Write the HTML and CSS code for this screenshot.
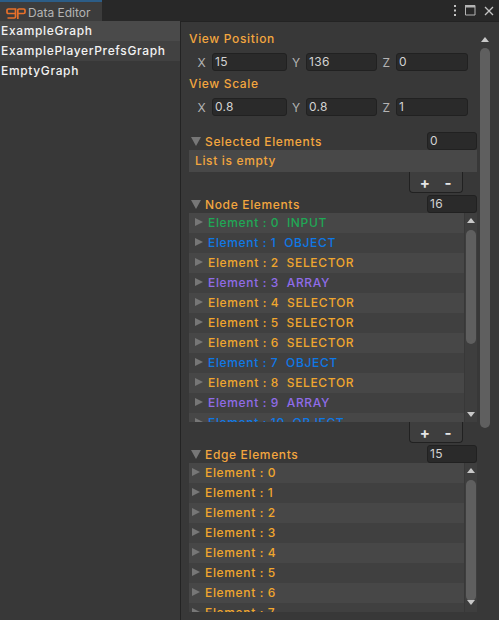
FILE: index.html
```html
<!DOCTYPE html>
<html lang="en">
<head>
    <meta charset="UTF-8">
    <title>Data Editor</title>
    <link rel="stylesheet" href="styles.css">
</head>
<body>

    <header class="tabbar">
        <div class="tab">
            <svg class="logo" width="20" height="11" viewBox="0 0 20 11">
                <path d="M9.500 5.500H2.300Q1 5.500 1 4.200V2.300Q1 1 2.300 1H9.500V8.700Q9.500 10 8.200 10H1.500" fill="none" stroke="#e8702a" stroke-width="1.700"/>
                <path d="M11.800 11V2.300Q11.800 1 13.100 1H17.700Q19 1 19 2.300V4.200Q19 5.500 17.700 5.500H11.800" fill="none" stroke="#e8702a" stroke-width="1.700"/>
            </svg>
            <span class="tab-title">Data Editor</span>
        </div>
        <div class="window-btns">
            <svg width="4" height="11" viewBox="0 0 4 11"><path d="M1 0h2v2H1zM1 4.500h2v2H1zM1 9h2v2H1z" fill="#c4c4c4"/></svg>
            <svg width="11" height="11" viewBox="0 0 11 11"><path d="M.5 .5h9.500v9.500H.5z" fill="none" stroke="#b4b4b4"/><path d="M0 0h10v2.500H0z" fill="#b4b4b4"/></svg>
            <svg width="10" height="10" viewBox="0 0 10 10"><path d="M1 1l8 8M9 1l-8 8" stroke="#c4c4c4" stroke-width="1.300"/></svg>
        </div>
    </header>

    <main class="panes">
        <nav class="graph-list">
            <div class="graph selected">ExampleGraph</div>
            <div class="graph alt">ExamplePlayerPrefsGraph</div>
            <div class="graph">EmptyGraph</div>
        </nav>

        <section class="inspector">
            <div class="content">
                <h2 class="label first">View Position</h2>
                <div class="vector">
                    <span>X</span><div class="field">15</div>
                    <span>Y</span><div class="field">136</div>
                    <span>Z</span><div class="field">0</div>
                </div>
                <h2 class="label">View Scale</h2>
                <div class="vector">
                    <span>X</span><div class="field">0.8</div>
                    <span>Y</span><div class="field">0.8</div>
                    <span>Z</span><div class="field">1</div>
                </div>

                <div class="list-head head-selected">
                    <i class="tri down"></i><h2>Selected Elements</h2><div class="field count">0</div>
                </div>
                <div class="empty">List is empty</div>
                <div class="footer"><div class="addremove"><b>+</b><b>-</b></div></div>

                <div class="list-head">
                    <i class="tri down"></i><h2>Node Elements</h2><div class="field count">16</div>
                </div>
                <div class="list nodes">
                    <div class="rows">
                        <div class="row"><i class="tri right"></i><span class="green">Element : 0&nbsp; INPUT</span></div>
                        <div class="row"><i class="tri right"></i><span class="blue">Element : 1&nbsp; OBJECT</span></div>
                        <div class="row"><i class="tri right"></i><span class="orange">Element : 2&nbsp; SELECTOR</span></div>
                        <div class="row"><i class="tri right"></i><span class="purple">Element : 3&nbsp; ARRAY</span></div>
                        <div class="row"><i class="tri right"></i><span class="orange">Element : 4&nbsp; SELECTOR</span></div>
                        <div class="row"><i class="tri right"></i><span class="orange">Element : 5&nbsp; SELECTOR</span></div>
                        <div class="row"><i class="tri right"></i><span class="orange">Element : 6&nbsp; SELECTOR</span></div>
                        <div class="row"><i class="tri right"></i><span class="blue">Element : 7&nbsp; OBJECT</span></div>
                        <div class="row"><i class="tri right"></i><span class="orange">Element : 8&nbsp; SELECTOR</span></div>
                        <div class="row"><i class="tri right"></i><span class="purple">Element : 9&nbsp; ARRAY</span></div>
                        <div class="row"><i class="tri right"></i><span class="blue">Element : 10&nbsp; OBJECT</span></div>
                    </div>
                    <div class="scroll inner"><i class="arrow up"></i><div class="track"><div class="thumb"></div></div><i class="arrow dn"></i></div>
                </div>
                <div class="footer"><div class="addremove"><b>+</b><b>-</b></div></div>

                <div class="list-head">
                    <i class="tri down"></i><h2>Edge Elements</h2><div class="field count">15</div>
                </div>
                <div class="list edges">
                    <div class="rows">
                        <div class="row"><i class="tri right"></i><span class="orange">Element : 0</span></div>
                        <div class="row"><i class="tri right"></i><span class="orange">Element : 1</span></div>
                        <div class="row"><i class="tri right"></i><span class="orange">Element : 2</span></div>
                        <div class="row"><i class="tri right"></i><span class="orange">Element : 3</span></div>
                        <div class="row"><i class="tri right"></i><span class="orange">Element : 4</span></div>
                        <div class="row"><i class="tri right"></i><span class="orange">Element : 5</span></div>
                        <div class="row"><i class="tri right"></i><span class="orange">Element : 6</span></div>
                        <div class="row"><i class="tri right"></i><span class="orange">Element : 7</span></div>
                    </div>
                    <div class="scroll inner"><i class="arrow up"></i><div class="track"><div class="thumb"></div></div><i class="arrow dn"></i></div>
                </div>
            </div>
            <div class="scroll outer"><i class="arrow up"></i><div class="track"><div class="thumb"></div></div></div>
        </section>
    </main>

</body>
</html>
```

FILE: styles.css
```css
html, body {
    margin: 0;
    padding: 0;
    height: 100%;
    overflow: hidden;
}

body {
    display: flex;
    flex-direction: column;
    background: #383838;
    color: #ddd;
    font-family: Inter, "Noto Sans", sans-serif;
    font-size: 12px;
    letter-spacing: 0.65px;
}

h2 {
    margin: 0;
    font-size: 12px;
    font-weight: 500;
    color: #f3a63f;
}

/* Tab bar */
.tabbar {
    height: 21px;
    flex: none;
    display: flex;
    justify-content: space-between;
    background: #282828;
}

.tab {
    width: 102px;
    box-sizing: border-box;
    border-top: 2px solid #2c5d87;
    background: #3c3c3c;
    display: flex;
    align-items: center;
    gap: 2px;
    padding-left: 6px;
    color: #b4b4b4;
    letter-spacing: 0;
}

.logo { margin-top: 3px; }
.tab-title { padding-top: 2px; }

.window-btns {
    display: flex;
    align-items: center;
    gap: 8px;
    padding-right: 5px;
}

/* Panes */
.panes {
    flex: 1;
    display: flex;
    min-height: 0;
}

.graph-list {
    width: 180px;
    flex: none;
    border-right: 1px solid #232323;
    font-weight: 500;
    color: #f2f2f2;
}

.graph {
    height: 20px;
    line-height: 20px;
    padding-left: 1px;
}

.graph.selected { background: #4a4a4a; }
.graph.alt { background: #414141; }

.inspector {
    flex: 1;
    display: flex;
    min-width: 0;
    border-top: 1px solid #232323;
}

.content {
    width: 288px;
    flex: none;
    padding: 9px 0 0 8px;
    overflow: hidden;
}

.label {
    height: 15px;
    line-height: 15px;
    margin-top: 5px;
}

.label.first { margin-top: 0; }

.vector {
    display: grid;
    grid-template-columns: 23px 75px 19px 71px 19px 72px;
    margin-top: 7px;
    height: 18px;
    align-items: center;
    justify-items: center;
    color: #b4b4b4;
}

.vector span:first-child { padding-left: 3px; }

.field {
    justify-self: stretch;
    height: 18px;
    box-sizing: border-box;
    border: 1px solid #212121;
    border-radius: 3px;
    background: #2a2a2a;
    color: #d2d2d2;
    line-height: 16px;
    padding-left: 2px;
    font-size: 12px;
    letter-spacing: 0.3px;
}

/* Lists */
.list-head {
    display: flex;
    align-items: center;
    height: 18px;
}

.list-head h2 { flex: 1; margin-left: 4px; }
.head-selected { margin-top: 16px; }

.count {
    width: 50px;
    flex: none;
    margin-left: auto;
}

.tri {
    display: block;
    flex: none;
    width: 0;
    height: 0;
}

.tri.down {
    margin-left: 2px;
    border-left: 5px solid transparent;
    border-right: 5px solid transparent;
    border-top: 9px solid #777;
}

.tri.right {
    margin: 0 5px 0 6px;
    border-top: 4.500px solid transparent;
    border-bottom: 4.500px solid transparent;
    border-left: 8px solid #777;
}

.empty {
    height: 22px;
    line-height: 22px;
    padding-left: 6px;
    background: #484848;
    font-weight: 500;
    color: #f3a63f;
}

.footer {
    display: flex;
    justify-content: flex-end;
    height: 23px;
    padding-right: 14px;
}

.addremove {
    width: 54px;
    height: 21px;
    box-sizing: border-box;
    display: flex;
    justify-content: center;
    gap: 14px;
    background: #3e3e3e;
    border: 1px solid #212121;
    border-top: 0;
    border-radius: 0 0 4px 4px;
    line-height: 22px;
    font-size: 15px;
    color: #e6e6e6;
}

.list {
    display: flex;
    background: #414141;
}

.list.nodes { height: 209px; }
.list.edges { height: 149px; }

.rows {
    flex: 1;
    min-width: 0;
    overflow: hidden;
}

.row {
    height: 20px;
    box-sizing: border-box;
    padding-bottom: 2px;
    display: flex;
    align-items: center;
    font-weight: 500;
}

.row:nth-child(odd) { background: #474747; }
.row:nth-child(even) { background: #404040; }

.edges .tri.right { margin: 0 5px 0 3px; }

.green { color: #1fa855; }
.blue { color: #0f78e6; }
.orange { color: #f0a62e; }
.purple { color: #8f6ce8; }

/* Scrollbars */
.scroll {
    flex: none;
    width: 14px;
    display: flex;
    flex-direction: column;
    align-items: center;
}

.scroll.outer {
    margin-top: 15px;
    margin-left: 1px;
    background: #383838;
}

.scroll.inner {
    width: 13px;
    background: #3e3e3e;
    border-left: 1px solid #383838;
    box-sizing: border-box;
}

.track {
    flex: 1;
    width: 100%;
    min-height: 0;
}

.thumb {
    width: 10px;
    margin: 0 auto;
    background: #5f5f5f;
    border-radius: 5px;
}

.scroll.outer .thumb { height: 380px; }
.nodes .thumb { height: 114px; }
.edges .thumb { height: 121px; }

.arrow {
    display: block;
    flex: none;
    width: 0;
    height: 0;
    margin: 0 0 6px;
    border-left: 4px solid transparent;
    border-right: 4px solid transparent;
}

.inner .arrow.up { margin: 5px 0 7px; }
.arrow.dn { margin: 0 0 5px; }
.edges .arrow.dn { margin-bottom: 7px; }
.arrow.up { border-bottom: 5px solid #c8c8c8; }
.arrow.dn { border-top: 5px solid #c8c8c8; }
```
